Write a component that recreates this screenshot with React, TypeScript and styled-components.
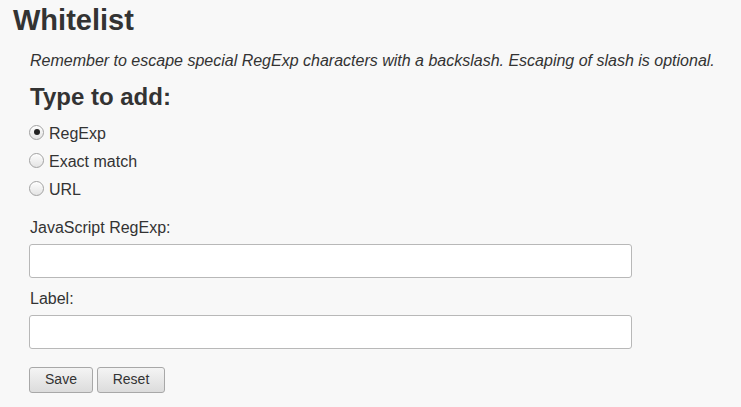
import React from "react";
import styled, { createGlobalStyle } from "styled-components";

const Global = createGlobalStyle`
  html, body { margin: 0; padding: 0; background: #f8f8f8; }
  body { font-family: "Liberation Sans", Arial, sans-serif; color: #333; }
`;

const Page = styled.div`
  width: 741px;
  height: 407px;
  background: #f8f8f8;
  overflow: hidden;
`;

const Title = styled.h1`
  margin: 0;
  padding: 3px 0 0 13px;
  font-size: 29px;
  line-height: 34px;
  font-weight: bold;
  color: #333;
`;

const Body = styled.div`
  padding: 0 0 0 29px;
  display: flex;
  flex-direction: column;
  align-items: flex-start;
`;

const Note = styled.p`
  margin: 15px 0 0 1px;
  font-size: 16px;
  line-height: 18px;
  font-style: italic;
  color: #333;
`;

const SubTitle = styled.h2`
  margin: 13px 0 0 1px;
  font-size: 24px;
  line-height: 28px;
  font-weight: bold;
  color: #333;
`;

const Radios = styled.div`
  display: flex;
  flex-direction: column;
  gap: 8px;
  margin-top: 13px;
`;

const RadioRow = styled.label`
  display: flex;
  align-items: flex-start;
  gap: 5px;
  height: 20px;
  font-size: 16px;
  line-height: 20px;
  color: #333;
`;

const RadioDot = styled.span<{ $on?: boolean }>`
  width: 15px;
  height: 15px;
  margin-top: 0.5px;
  box-sizing: border-box;
  border-radius: 50%;
  border: 1px solid #a2a2a2;
  background: linear-gradient(#fdfdfd, #e4e4e4);
  box-shadow: inset 0 1px 0 #fff;
  display: flex;
  align-items: center;
  justify-content: center;
  &::after {
    content: "";
    width: 6px;
    height: 6px;
    border-radius: 50%;
    background: #222;
    display: ${(p) => (p.$on ? "block" : "none")};
  }
`;

const FieldLabel = styled.div<{ $top: number }>`
  margin: ${(p) => p.$top}px 0 0 1px;
  font-size: 16px;
  line-height: 18px;
  color: #333;
`;

const TextInput = styled.input`
  box-sizing: border-box;
  width: 603px;
  height: 34px;
  margin-top: 7px;
  border: 1px solid #b8b8b8;
  border-radius: 3px;
  background: #fff;
  font-family: inherit;
  font-size: 15px;
  padding: 0 6px;
  outline: none;
`;

const Buttons = styled.div`
  display: flex;
  gap: 4px;
  margin-top: 18px;
`;

const Button = styled.button<{ $w: number }>`
  box-sizing: border-box;
  width: ${(p) => p.$w}px;
  height: 26px;
  padding: 0 0 2px;
  border: 1px solid #a8a8a8;
  border-radius: 3px;
  background: linear-gradient(#f4f4f4, #dcdcdc);
  font-family: "Liberation Sans", Arial, sans-serif;
  font-size: 14px;
  color: #333;
`;

export default function App() {
  return (
    <Page>
      <Global />
      <Title>Whitelist</Title>
      <Body>
        <Note>
          Remember to escape special RegExp characters with a backslash. Escaping of slash is optional.
        </Note>
        <SubTitle>Type to add:</SubTitle>
        <Radios>
          <RadioRow>
            <RadioDot $on />
            RegExp
          </RadioRow>
          <RadioRow>
            <RadioDot />
            Exact match
          </RadioRow>
          <RadioRow>
            <RadioDot />
            URL
          </RadioRow>
        </Radios>
        <FieldLabel $top={19}>JavaScript RegExp:</FieldLabel>
        <TextInput />
        <FieldLabel $top={12}>Label:</FieldLabel>
        <TextInput />
        <Buttons>
          <Button $w={64}>Save</Button>
          <Button $w={68}>Reset</Button>
        </Buttons>
      </Body>
    </Page>
  );
}
